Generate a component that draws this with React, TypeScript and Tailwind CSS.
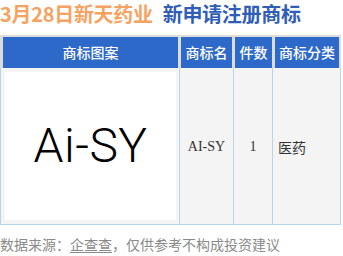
// Trademark registration card

const cols = 'grid grid-cols-[175px_51px_37px_1fr]'

export default function App() {
  return (
    <div className="w-[343px] h-[256px] bg-white overflow-hidden font-['Noto_Sans_CJK_SC','Noto_Sans',sans-serif]">
      <div className="flex items-center gap-[10px] h-[27px] text-[20px] font-bold leading-none tracking-[-0.3px]">
        <span className="text-[#f6a261]">3月28日新天药业</span>
        <span className="text-[#2f5db7]">新申请注册商标</span>
      </div>

      <div className="mt-[8px] w-[341px]">
        <div className={`${cols} gap-x-[3px] bg-[#dcdcdc] pl-[3px] pr-[2px] pt-[2px]`}>
          {['商标图案', '商标名', '件数', '商标分类'].map((t) => (
            <div
              key={t}
              className="h-[31px] bg-[#2d69c9] text-white text-[14px] font-medium flex items-center justify-center whitespace-nowrap"
            >
              {t}
            </div>
          ))}
        </div>

        <div className="grid grid-cols-[179px_54px_39px_1fr] h-[157px] border border-t-0 border-[#b8d4ec] bg-[#f4f4f4] text-[14px] text-[#333]">
          <div className="pl-[4px] pr-[3px] py-[4px] border-r border-[#b8d4ec]">
            <div className="h-full bg-white flex items-center justify-center">
              <span className="font-['Roboto',sans-serif] font-light text-[48px] leading-none tracking-[0.5px] text-black">
                Ai-SY
              </span>
            </div>
          </div>
          <div className="flex items-center justify-center border-r border-[#b8d4ec] font-['Liberation_Serif',serif]">
            AI-SY
          </div>
          <div className="flex items-center justify-center border-r border-[#b8d4ec] font-['Liberation_Serif',serif]">
            1
          </div>
          <div className="flex items-center pl-[5px] pt-[2px]">医药</div>
        </div>
      </div>

      <div className="mt-[9px] text-[14px] leading-[21px] text-[#8a8a8a] whitespace-nowrap">
        数据来源：<span className="underline underline-offset-2">企查查</span>，仅供参考不构成投资建议
      </div>
    </div>
  )
}
